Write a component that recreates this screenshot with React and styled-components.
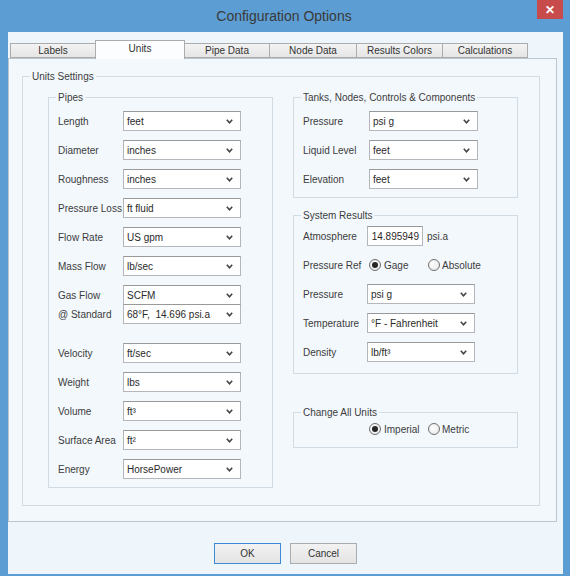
import React from 'react'
import styled, { createGlobalStyle } from 'styled-components'

const Global = createGlobalStyle`
  html, body { margin: 0; padding: 0; }
  body { font-family: "Liberation Sans", Arial, sans-serif; }
`

const Window = styled.div`
  width: 570px;
  height: 576px;
  box-sizing: border-box;
  padding: 0 7px 2px 8px;
  background: #5c9dd3;
  display: flex;
  flex-direction: column;
`

const TitleBar = styled.div`
  height: 32px;
  flex: none;
  display: grid;
  grid-template-columns: 1fr auto 1fr;
`

const Title = styled.div`
  grid-column: 2;
  align-self: center;
  font-size: 14px;
  color: #3a3a3a;
  padding-right: 3px;
`

const Close = styled.div`
  grid-column: 3;
  justify-self: end;
  width: 26px;
  height: 19px;
  background: #c84b4b;
  color: #fff;
  font-size: 12px;
  font-weight: bold;
  display: flex;
  align-items: center;
  justify-content: center;
`

const Client = styled.div`
  flex: 1;
  background: #eef5fb;
  padding-top: 9px;
  display: flex;
  flex-direction: column;
`

const TabStrip = styled.div`
  height: 17px;
  display: flex;
  align-items: flex-end;
  padding-left: 2px;
`

const Tab = styled.div`
  position: relative;
  width: ${p => p.$w}px;
  height: ${p => (p.$active ? 19 : 15)}px;
  margin-bottom: ${p => (p.$active ? -1 : 0)}px;
  margin-left: -1px;
  &:first-child { margin-left: 0; }
  box-sizing: border-box;
  border: 1px solid #acacac;
  border-bottom: ${p => (p.$active ? 'none' : '1px solid #acacac')};
  background: ${p => (p.$active ? '#fbfdfe' : 'linear-gradient(#f3f3f3, #e5e5e5)')};
  z-index: ${p => (p.$active ? 2 : 1)};
  font-size: 10px;
  color: #333;
  display: flex;
  align-items: center;
  justify-content: center;
  padding-bottom: ${p => (p.$active ? 3 : 0)}px;
`

const Panel = styled.div`
  width: 549px;
  height: 464px;
  box-sizing: border-box;
  border: 1px solid #bcc6cf;
  background: #f3f8fc;
  padding: 11px 16px 15px 13px;
  display: flex;
  flex-direction: column;
`

const Group = styled.fieldset`
  margin: 0;
  margin-top: ${p => p.$mt || 0}px;
  padding: 0;
  min-width: 0;
  border: 1px solid #d2dce5;
  display: flex;
  flex-direction: column;
  flex: ${p => (p.$fill ? 1 : 'none')};
`

const Legend = styled.legend`
  margin-left: 7px;
  padding: 0 2px;
  font-size: 10px;
  line-height: 13px;
  color: #3c3c3c;
`

const Columns = styled.div`
  display: grid;
  grid-template-columns: 225px 225px;
  column-gap: 20px;
  align-items: start;
  padding: 8px 0 0 25px;
`

const Stack = styled.div`
  display: flex;
  flex-direction: column;
`

const Rows = styled.div`
  display: flex;
  flex-direction: column;
  gap: 9px;
  padding: ${p => p.$pt}px 0 ${p => p.$pb}px ${p => p.$pl || 9}px;
`

const Row = styled.div`
  display: grid;
  grid-template-columns: ${p => p.$label}px auto;
  align-items: center;
  height: 20px;
  margin-top: ${p => p.$mt || 0}px;
`

const Label = styled.span`
  font-size: 10px;
  color: #3c3c3c;
  white-space: nowrap;
`

const Combo = styled.div`
  width: ${p => p.$w}px;
  height: 20px;
  box-sizing: border-box;
  border: 1px solid #b4b6bb;
  border-top-color: #999;
  background: #fff;
  display: flex;
  align-items: center;
  justify-content: space-between;
  padding: 0 7px 0 3px;
  font-size: 10px;
  color: #2a2a2a;
  white-space: pre;
`

const Field = styled.div`
  display: flex;
  align-items: center;
  gap: 4px;
`

const TextBox = styled.div`
  width: 56px;
  height: 20px;
  box-sizing: border-box;
  border: 1px solid #b4b6bb;
  border-top-color: #999;
  background: #fff;
  padding-right: 3px;
  font-size: 10px;
  color: #2a2a2a;
  display: flex;
  align-items: center;
  justify-content: flex-end;
`

const Radios = styled.div`
  display: flex;
  align-items: center;
  padding: ${p => p.$pad || 0};
`

const RadioItem = styled.label`
  display: inline-flex;
  align-items: center;
  gap: ${p => p.$gap}px;
  width: ${p => (p.$w ? `${p.$w}px` : 'auto')};
  font-size: 10px;
  color: #3c3c3c;
`

const Dot = styled.span`
  width: 12px;
  height: 12px;
  box-sizing: border-box;
  border-radius: 50%;
  border: 1px solid #707070;
  background: radial-gradient(circle at 40% 40%, #ffffff, #e3e3e3);
  display: flex;
  align-items: center;
  justify-content: center;
  &::after {
    content: '';
    display: ${p => (p.$on ? 'block' : 'none')};
    width: 6px;
    height: 6px;
    border-radius: 50%;
    background: #262626;
  }
`

const ButtonBar = styled.div`
  margin-top: 21px;
  display: flex;
  justify-content: center;
  gap: 9px;
`

const Button = styled.div`
  width: 67px;
  height: 21px;
  box-sizing: border-box;
  border: 1px solid ${p => (p.$default ? '#3d8bd6' : '#acacac')};
  background: linear-gradient(#f2f2f2, #e4e4e4);
  font-size: 10px;
  color: #333;
  display: flex;
  align-items: center;
  justify-content: center;
`

const Chevron = () => (
  <svg width="7" height="5" viewBox="0 0 7 5">
    <path d="M0.8 0.8 L3.5 3.8 L6.2 0.8" fill="none" stroke="#444" strokeWidth="1.6" />
  </svg>
)

const Select = ({ value, w }) => (
  <Combo $w={w}>
    <span>{value}</span>
    <Chevron />
  </Combo>
)

const Radio = ({ label, on, w, gap }) => (
  <RadioItem $w={w} $gap={gap}>
    <Dot $on={on} />
    {label}
  </RadioItem>
)

const tabs = [
  ['Labels', 86],
  ['Units', 90, true],
  ['Pipe Data', 86],
  ['Node Data', 88],
  ['Results Colors', 87],
  ['Calculations', 86],
]

const topPipes = [
  ['Length', 'feet'],
  ['Diameter', 'inches'],
  ['Roughness', 'inches'],
  ['Pressure Loss', 'ft fluid'],
  ['Flow Rate', 'US gpm'],
  ['Mass Flow', 'lb/sec'],
]

const lowPipes = [
  ['Velocity', 'ft/sec'],
  ['Weight', 'lbs'],
  ['Volume', 'ft³'],
  ['Surface Area', 'ft²'],
  ['Energy', 'HorsePower'],
]

const tanks = [
  ['Pressure', 'psi g'],
  ['Liquid Level', 'feet'],
  ['Elevation', 'feet'],
]

const results = [
  ['Pressure', 'psi g'],
  ['Temperature', '°F - Fahrenheit'],
  ['Density', 'lb/ft³'],
]

export default function App() {
  return (
    <>
      <Global />
      <Window>
        <TitleBar>
          <Title>Configuration Options</Title>
          <Close>✕</Close>
        </TitleBar>
        <Client>
          <TabStrip>
            {tabs.map(([name, w, active]) => (
              <Tab key={name} $w={w} $active={active}>{name}</Tab>
            ))}
          </TabStrip>
          <Panel>
            <Group $fill>
              <Legend>Units Settings</Legend>
              <Columns>
                <Group>
                  <Legend>Pipes</Legend>
                  <Rows $pt={7} $pb={8}>
                    {topPipes.map(([l, v]) => (
                      <Row key={l} $label={65}>
                        <Label>{l}</Label>
                        <Select value={v} w={118} />
                      </Row>
                    ))}
                    <Stack>
                      <Row $label={65}>
                        <Label>Gas Flow</Label>
                        <Select value="SCFM" w={118} />
                      </Row>
                      <Row $label={65} $mt={-1}>
                        <Label>@ Standard</Label>
                        <Select value={'68°F,  14.696 psi.a'} w={118} />
                      </Row>
                    </Stack>
                    {lowPipes.map(([l, v], i) => (
                      <Row key={l} $label={65} $mt={i === 0 ? 10 : 0}>
                        <Label>{l}</Label>
                        <Select value={v} w={118} />
                      </Row>
                    ))}
                  </Rows>
                </Group>
                <Stack>
                  <Group>
                    <Legend>Tanks, Nodes, Controls &amp; Components</Legend>
                    <Rows $pt={7} $pb={8}>
                      {tanks.map(([l, v]) => (
                        <Row key={l} $label={66}>
                          <Label>{l}</Label>
                          <Select value={v} w={109} />
                        </Row>
                      ))}
                    </Rows>
                  </Group>
                  <Group $mt={11}>
                    <Legend>System Results</Legend>
                    <Rows $pt={4} $pb={11}>
                      <Row $label={64}>
                        <Label>Atmosphere</Label>
                        <Field>
                          <TextBox>14.895949</TextBox>
                          <Label>psi.a</Label>
                        </Field>
                      </Row>
                      <Row $label={66}>
                        <Label>Pressure Ref</Label>
                        <Radios>
                          <Radio label="Gage" on w={59} gap={3} />
                          <Radio label="Absolute" gap={2} />
                        </Radios>
                      </Row>
                      {results.map(([l, v]) => (
                        <Row key={l} $label={64}>
                          <Label>{l}</Label>
                          <Select value={v} w={108} />
                        </Row>
                      ))}
                    </Rows>
                  </Group>
                  <Group $mt={32}>
                    <Legend>Change All Units</Legend>
                    <Radios $pad="4px 0 12px 75px">
                      <Radio label="Imperial" on w={59} gap={3} />
                      <Radio label="Metric" gap={2} />
                    </Radios>
                  </Group>
                </Stack>
              </Columns>
            </Group>
          </Panel>
          <ButtonBar>
            <Button $default>OK</Button>
            <Button>Cancel</Button>
          </ButtonBar>
        </Client>
      </Window>
    </>
  )
}
